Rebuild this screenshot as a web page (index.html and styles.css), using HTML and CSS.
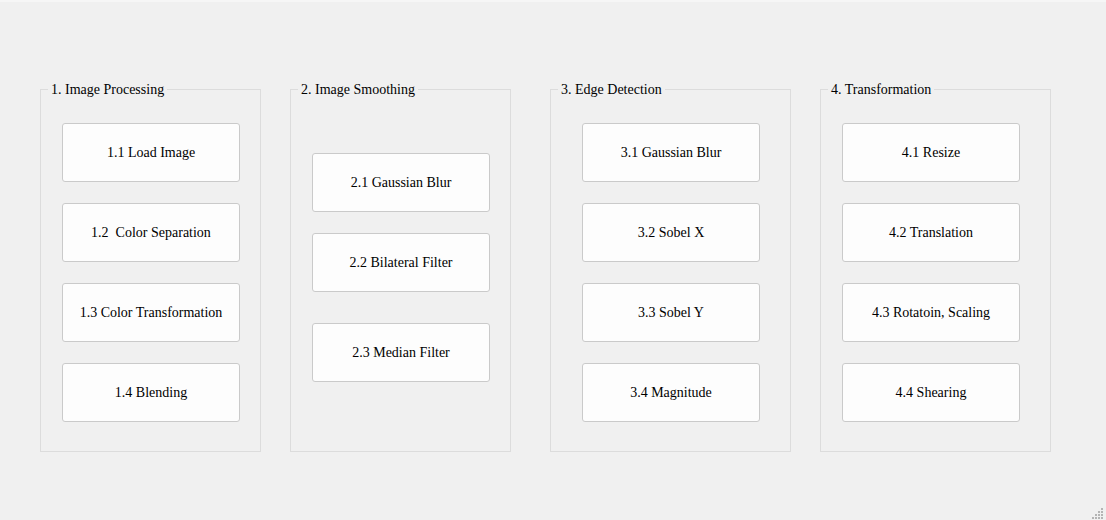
FILE: index.html
```html
<!DOCTYPE html>
<html>
<head>
<meta charset="utf-8">
<link rel="stylesheet" href="styles.css">
</head>
<body>
<div class="window">
  <div class="groups">
    <section class="group group-1">
      <span class="group-title">1. Image Processing</span>
      <button class="btn">1.1 Load Image</button>
      <button class="btn">1.2  Color Separation</button>
      <button class="btn">1.3 Color Transformation</button>
      <button class="btn">1.4 Blending</button>
    </section>
    <section class="group group-2">
      <span class="group-title">2. Image Smoothing</span>
      <button class="btn">2.1 Gaussian Blur</button>
      <button class="btn">2.2 Bilateral Filter</button>
      <button class="btn btn-wide-gap">2.3 Median Filter</button>
    </section>
    <section class="group group-3">
      <span class="group-title">3. Edge Detection</span>
      <button class="btn">3.1 Gaussian Blur</button>
      <button class="btn">3.2 Sobel X</button>
      <button class="btn">3.3 Sobel Y</button>
      <button class="btn">3.4 Magnitude</button>
    </section>
    <section class="group group-4">
      <span class="group-title">4. Transformation</span>
      <button class="btn">4.1 Resize</button>
      <button class="btn">4.2 Translation</button>
      <button class="btn">4.3 Rotatoin, Scaling</button>
      <button class="btn">4.4 Shearing</button>
    </section>
  </div>
  <svg class="size-grip" width="14" height="14" viewBox="0 0 14 14">
    <rect x="10" y="2" width="2" height="2" fill="#b4b4b4"/>
    <rect x="7" y="5" width="2" height="2" fill="#b4b4b4"/>
    <rect x="10" y="5" width="2" height="2" fill="#b4b4b4"/>
    <rect x="4" y="8" width="2" height="2" fill="#b4b4b4"/>
    <rect x="7" y="8" width="2" height="2" fill="#b4b4b4"/>
    <rect x="10" y="8" width="2" height="2" fill="#b4b4b4"/>
    <rect x="1" y="11" width="2" height="2" fill="#b4b4b4"/>
    <rect x="4" y="11" width="2" height="2" fill="#b4b4b4"/>
    <rect x="7" y="11" width="2" height="2" fill="#b4b4b4"/>
    <rect x="10" y="11" width="2" height="2" fill="#b4b4b4"/>
  </svg>
</div>
</body>
</html>
```

FILE: styles.css
```css
* {
  box-sizing: border-box;
}

html, body {
  margin: 0;
  padding: 0;
  background: #f0f0f0;
  font-family: "Liberation Serif", "Times New Roman", serif;
}

.window {
  position: relative;
  width: 1106px;
  height: 520px;
  background: #f0f0f0;
  border-top: 2px solid #f6f6f6;
  font-family: "Liberation Serif", "Times New Roman", serif;
  font-size: 14px;
  color: #000;
  overflow: hidden;
}

.groups {
  display: flex;
  align-items: flex-start;
  padding-top: 87px;
  padding-left: 40px;
}

.group {
  position: relative;
  display: flex;
  flex-direction: column;
  align-items: flex-start;
  gap: 21px;
  height: 363px;
  border: 1px solid #dcdcdc;
  padding-top: 33px;
  padding-left: 21px;
}

.group-1 {
  width: 221px;
}

.group-2 {
  width: 221px;
  margin-left: 29px;
  padding-top: 63px;
}

.group-3 {
  width: 241px;
  margin-left: 39px;
  padding-left: 31px;
}

.group-4 {
  width: 231px;
  margin-left: 29px;
}

.group-title {
  position: absolute;
  top: -8px;
  left: 7px;
  padding: 0 3px;
  line-height: 16px;
  background: #f0f0f0;
  white-space: pre;
}

.btn {
  width: 178px;
  height: 59px;
  margin: 0;
  padding: 0;
  background: #fdfdfd;
  border: 1px solid #cacaca;
  border-radius: 3px;
  font-family: "Liberation Serif", "Times New Roman", serif;
  font-size: 14px;
  color: #000;
  white-space: pre;
  flex: none;
}

.btn-wide-gap {
  margin-top: 10px;
}

.size-grip {
  position: absolute;
  right: 1px;
  bottom: 0;
}
```
